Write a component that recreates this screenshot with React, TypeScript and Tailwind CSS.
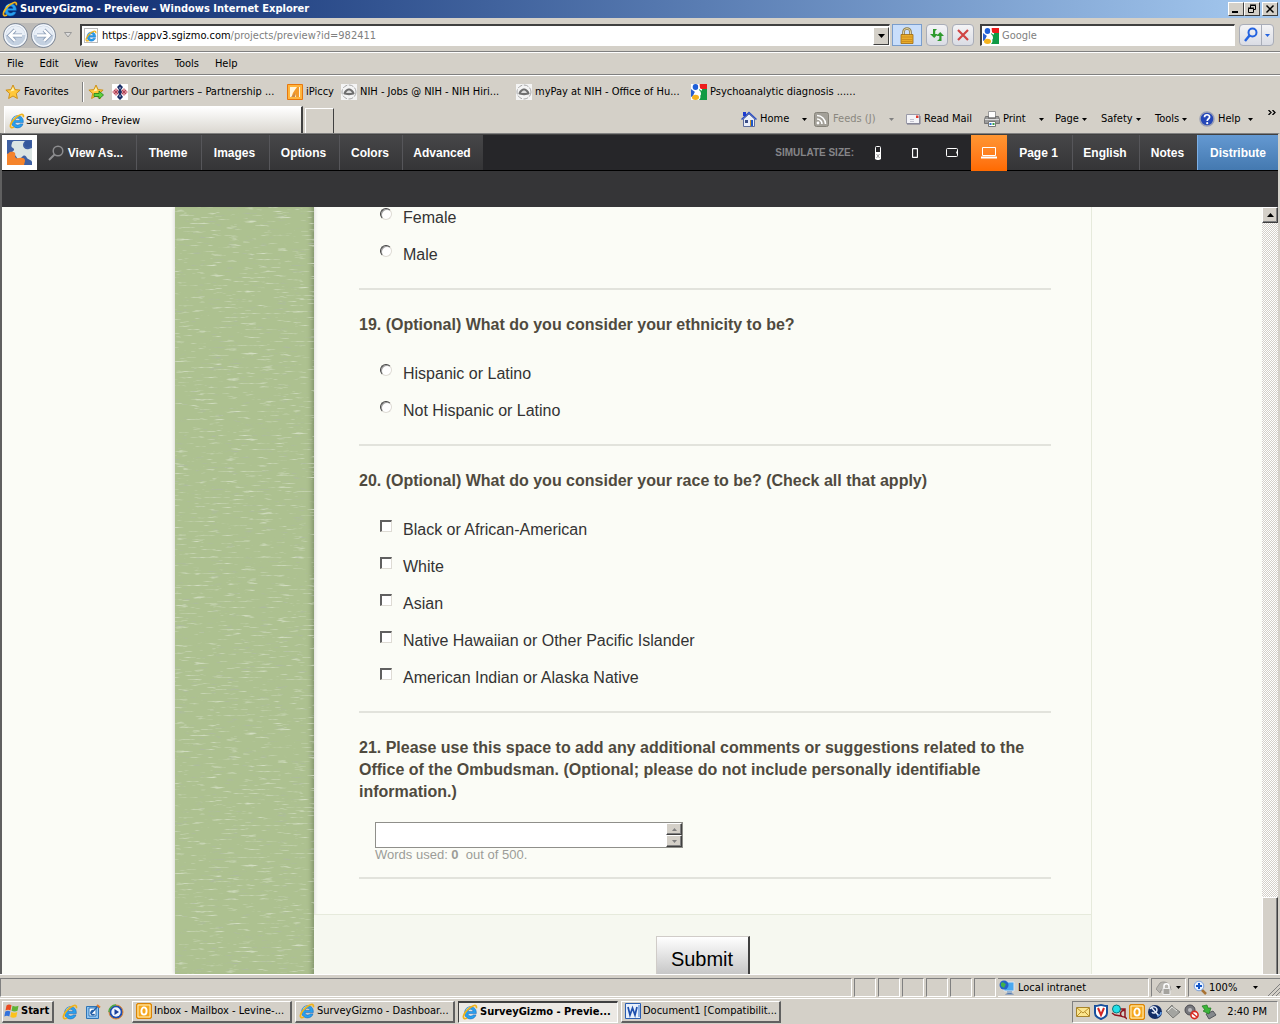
import {ReactNode} from "react";
import clsx from "clsx";

const raised = "border border-t-white border-l-white border-r-[#404040] border-b-[#404040] bg-[#d4d0c8]";
const sunken = "border border-t-[#808080] border-l-[#808080] border-r-white border-b-white";

interface IconProps {
    className?: string;
}

function IeIcon({className = "size-4"}: IconProps) {
    return (
        <svg className={clsx("shrink-0", className)} viewBox="0 0 16 16">
            <path
                d="M14.300 9.600H6c.2 1.800 1.300 2.500 2.600 2.500 1 0 1.800-.4 2.200-1.200h3.200c-.8 2.600-2.800 4-5.500 4-3.600 0-5.900-2.400-5.900-6s2.400-6.200 6-6.200c3.800 0 6 2.600 5.700 6.900zM11 7.400C10.800 6 10 5.200 8.600 5.200S6.300 6 6.100 7.400z"
                fill="#28a0ee"
                stroke="#0f5cb4"
                strokeWidth=".5"
            />
            <path d="M4 6.500c.7-1.700 2.300-2.800 4.300-2.900" fill="none" stroke="#8fe0ff" strokeWidth="1.200" />
            <path
                d="M14.300 4.300C14.900 2 13.800.9 11.500 1.700 7.500 3 2.500 8.200 1.500 12c-.6 2.600 1 3.200 3.500 1.900"
                fill="none"
                stroke="#f0b31c"
                strokeWidth="1.700"
            />
        </svg>
    );
}

function GoogleIcon() {
    return (
        <svg className="size-4 shrink-0" viewBox="0 0 16 16">
            <path d="M0 0h16v16H0z" fill="#fff" />
            <path d="M8 0h8v5H9z" fill="#ee1c1c" />
            <path d="M8 5h8v11H8c2-2 2-4 0-6z" fill="#0f9a45" />
            <path d="M0 5l4 3-2 4-2 1z" fill="#2a5fd0" />
            <path d="M4 5c4 0 6 2 6 5s-3 2-8 2l2-4z" fill="#fff" />
            <ellipse cx="4.500" cy="3" fill="#1f5fd8" rx="2.800" ry="3" />
            <ellipse cx="4.500" cy="13.300" fill="#f5b21c" rx="3.500" ry="2.600" />
            <path d="M8 0v3c0 2 1 2.500 3 3" fill="none" stroke="#fff" strokeWidth="1.300" />
        </svg>
    );
}

function StarIcon({add = false}: {add?: boolean}) {
    return (
        <svg className="size-4 shrink-0" viewBox="0 0 16 16">
            <path
                d="M8 1l2.100 4.600 5 .5-3.800 3.400 1.100 5L8 12l-4.400 2.500 1.100-5L.9 6.100l5-.5z"
                fill="#ffc83a"
                stroke="#c98a12"
                strokeWidth=".9"
            />
            <path d="M8 3l1.400 3.400-4 1z" fill="#fff3b0" />
            {add && <path d="M6 9.500h5V7l4.500 4-4.500 4v-2.500H6z" fill="#5fd13c" stroke="#1d7d16" strokeWidth=".8" />}
        </svg>
    );
}

function PartnersIcon() {
    return (
        <svg className="size-4 shrink-0" viewBox="0 0 16 16">
            <path d="M0 0h16v16H0z" fill="#fff" />
            <path d="M0 8l4-4 4 4-4 4zM8 8l4-4 4 4-4 4z" fill="#d98a97" />
            <path d="M2 6l4 4M2 10l4-4M10 6l4 4M10 10l4-4" stroke="#b04456" />
            <path d="M8 0l3 3-2 3 1 2-1 2 2 3-3 3-3-3 2-3-1-2 1-2-2-3z" fill="#1c2f66" />
            <path d="M8 3v2M8 11v2" stroke="#b9c4e4" />
        </svg>
    );
}

function PiccyIcon() {
    return (
        <svg className="size-4 shrink-0" viewBox="0 0 16 16">
            <path d="M.5.500h15v15H.5z" fill="#ffb53e" stroke="#e8770c" />
            <path d="M3 3h10v10H3z" fill="#fff6e0" />
            <path d="M12 3v10H9l-1-3-3 3c0-4 3-7 5-10z" fill="#f39a2b" />
            <path d="M4 13l4-4v4z" fill="#c98a4a" />
        </svg>
    );
}

function NihIcon() {
    return (
        <svg className="size-4 shrink-0" viewBox="0 0 16 16">
            <path d="M0 0h16v16H0z" fill="#f4f4f4" />
            <circle cx="8" cy="8" fill="none" r="7" stroke="#a8a8a8" strokeDasharray="5 1.500" />
            <path d="M2.500 10c0-3 3-5.500 5.500-5.500s5.500 2.500 5.500 5.500c-2 1.500-9 1.500-11 0z" fill="#6f6f6f" />
            <path d="M5 9c1-2 2-2.500 3-2.500s2 .5 3 2.500z" fill="#ddd" />
        </svg>
    );
}

function HomeIcon() {
    return (
        <svg className="size-4 shrink-0" viewBox="0 0 16 16">
            <path d="M2.500 8v7.500h11V8L8 3z" fill="#e9eefa" stroke="#5c6c9c" />
            <path d="M.5 8.500L8 1.500l7.500 7" fill="none" stroke="#2c4fc4" strokeWidth="1.500" />
            <path d="M2 1h3v4H2z" fill="#1b3bd0" />
            <path d="M4 9h3v3H4z" fill="#3a4d86" />
            <path d="M9 9h3v6H9z" fill="#1f57c8" />
            <path d="M9 9h1v6H9z" fill="#c8992c" />
        </svg>
    );
}

function FeedIcon() {
    return (
        <svg className="size-[15px] shrink-0" viewBox="0 0 15 15">
            <rect fill="#a3a098" height="14" rx="2" stroke="#858279" width="14" x=".5" y=".5" />
            <circle cx="4" cy="11" fill="#fff" r="1.400" />
            <path d="M3 7a5 5 0 015 5M3 3.500A8.500 8.500 0 0111.500 12" fill="none" stroke="#fff" strokeWidth="1.600" />
        </svg>
    );
}

function MailIcon() {
    return (
        <svg className="h-4 w-[15px] shrink-0" viewBox="0 0 15 16">
            <path d="M.5 3.500h13v9H.5z" fill="#f4f4f8" stroke="#9a9aa8" />
            <path d="M1 13h13V5" fill="none" stroke="#77778a" />
            <path d="M10 4.500h2.500V7H10z" fill="#e0392b" />
            <path d="M4 8.500h4M4 10.500h4" stroke="#c4c4d0" />
        </svg>
    );
}

function PrintIcon() {
    return (
        <svg className="size-4 shrink-0" viewBox="0 0 16 16">
            <path d="M4.500.500h7v6h-7z" fill="#fff" stroke="#999" />
            <path d="M1.500 5.500h3v2h7v-2h3l1 3v4H.5v-4z" fill="#9b9b9b" stroke="#666" strokeWidth=".8" />
            <path d="M1 8.500h14" stroke="#dcdcdc" />
            <path d="M4.500 10.500h7v5h-7z" fill="#fff" stroke="#777" />
            <path d="M5.500 12h2v2h-2z" fill="#2b72d6" />
            <path d="M8.500 12h2v2h-2z" fill="#35a345" />
        </svg>
    );
}

function HelpIcon() {
    return (
        <svg className="size-4 shrink-0" viewBox="0 0 16 16">
            <circle cx="8" cy="8" fill="#2547b8" r="7" stroke="#9a9fb4" strokeWidth="1.500" />
            <path d="M5.500 6.200C5.500 3 10.600 3 10.600 6c0 1.800-2.400 1.800-2.400 4" fill="none" stroke="#fff" strokeWidth="1.700" />
            <circle cx="8.200" cy="12.200" fill="#fff" r="1.100" />
        </svg>
    );
}

function LockIcon() {
    return (
        <svg className="h-[17px] w-4" viewBox="0 0 16 17">
            <path d="M4.500 8V5a3.500 3.500 0 017 0v3" fill="none" stroke="#8b7a4a" strokeWidth="2.600" />
            <path d="M4.500 8V5a3.500 3.500 0 017 0v3" fill="none" stroke="#e5d6a0" />
            <path d="M2 7.500h12v9H2z" fill="#e9ac2a" stroke="#a0690e" strokeWidth=".8" />
            <path d="M2.500 10h11M2.500 12.500h11M2.500 14.500h11" stroke="#c8881c" strokeWidth=".8" />
        </svg>
    );
}

function NavArrow({flip = false}: {flip?: boolean}) {
    return (
        <svg className="size-[25px]" viewBox="0 0 25 25">
            <circle cx="12.500" cy="12.500" fill="#b3c3d8" r="12" stroke="#7d8592" />
            <circle cx="12.500" cy="12.500" fill="#c3d0e0" r="10.700" stroke="#f6f9fd" strokeWidth="1.300" />
            <path d="M3 12a9.500 9 0 0119 0z" fill="#e9eff7" />
            <g fill="none" transform={flip ? "rotate(180 12.500 12.500)" : undefined}>
                <path d="M12 7l-5.500 5.500L12 18M7 12.500h12" stroke="#8fa0b8" strokeWidth="4" />
                <path d="M12 7l-5.500 5.500L12 18M7 12.500h12" stroke="#fff" strokeWidth="2.400" />
            </g>
        </svg>
    );
}

function PuzzleIcon() {
    return (
        <svg className="size-[25px]" viewBox="0 0 25 25">
            <path d="M0 0h25v25H0z" fill="#3f60a2" />
            <path
                d="M5 3c0-1 1-2 2-2h11c-1 1-2 2-2 4 0 3 3 5 6 4l3-1v14c-1-3-4-2-5-4s-2-3-4-2-2 3-4 3-2-2-4-4c-2-1-3-1-3-3 2-1 3-3 1-4S4 6 5 3z"
                fill="#dbe5e4"
            />
            <circle cx="21" cy="4" fill="#34589d" r="3.300" />
            <path d="M0 14l2-1c0-1 4-2 6 0 1 2-1 3 1 5 2 1 4-1 6 0 3 0 3 2 3 3l-1 4H0z" fill="#f5842c" />
        </svg>
    );
}

function Caret({className = "fill-black"}: IconProps) {
    return (
        <svg className={clsx("h-[3px] w-[5px] shrink-0", className)} viewBox="0 0 5 3">
            <path d="M0 0h5L2.500 3z" />
        </svg>
    );
}

function WindowButton({label, children}: {label: string; children: ReactNode}) {
    return (
        <button aria-label={label} className={clsx(raised, "flex h-[14px] w-4 items-center justify-center")}>
            <svg className="h-[10px] w-[10px] shrink-0" fill="none" stroke="#000" viewBox="0 0 10 10">
                {children}
            </svg>
        </button>
    );
}

function TitleBar() {
    return (
        <header className="flex h-[18px] shrink-0 items-center gap-0.5 bg-linear-to-r from-[#0a246a] to-[#a6caf0] px-0.5">
            <IeIcon />
            <h1 className="flex-1 text-[11px] font-bold text-white">SurveyGizmo - Preview - Windows Internet Explorer</h1>
            <div className="flex">
                <WindowButton label="Minimize">
                    <path d="M1 8h6" strokeWidth="2" />
                </WindowButton>
                <WindowButton label="Restore">
                    <path d="M3.500 4V1.500h5v4H7M3 1h6M1.500 4.500h5v4h-5zM1 4h6" />
                </WindowButton>
                <span className="w-0.5" />
                <WindowButton label="Close">
                    <path d="M1.500 1.500l7 7M8.500 1.500l-7 7" strokeWidth="1.500" />
                </WindowButton>
            </div>
        </header>
    );
}

function AddressBar() {
    const tool = "flex h-[22px] items-center justify-center rounded-sm border border-[#a9adb8] bg-linear-to-b from-[#f4f4f6] to-[#dadce4]";

    return (
        <div className="flex h-[34px] shrink-0 items-center border-b border-[#808080] pt-px pr-1.5 pl-[3px]">
            <div className="mr-2 flex gap-[3px] rounded-full bg-[#bdbbb8]">
                <button aria-label="Back">
                    <NavArrow />
                </button>
                <button aria-label="Forward">
                    <NavArrow flip />
                </button>
            </div>
            <svg className="mr-2 h-1.5 w-2" fill="#ddd" stroke="#999" viewBox="0 0 8 6">
                <path d="M.5.500h7L4 5z" />
            </svg>
            <div className="flex h-[22px] flex-1 items-center border border-t-2 border-l-2 border-[#404040] border-r-white border-b-white bg-white pl-0.5">
                <span className="mr-1 flex h-[15px] w-3.5 items-center border border-[#bbb]">
                    <IeIcon className="size-3" />
                </span>
                <span className="flex-1 text-[11px] text-[#808080]">
                    <span className="text-black">https</span>://<span className="text-black">appv3.sgizmo.com</span>
                    /projects/preview?id=982411
                </span>
                <button
                    aria-label="Show addresses"
                    className={clsx(raised, "flex h-[18px] w-4 items-center justify-center")}
                >
                    <svg className="h-1 w-[7px]" viewBox="0 0 7 4">
                        <path d="M0 0h7L3.500 4z" />
                    </svg>
                </button>
            </div>
            <button
                aria-label="Security report"
                className="ml-0.5 flex h-[22px] w-[30px] items-center justify-center border border-[#7a9dcc] bg-[#c9defb]"
            >
                <LockIcon />
            </button>
            <button aria-label="Refresh" className={clsx(tool, "ml-1 w-[22px]")}>
                <svg className="size-4" fill="#2f9a2f" viewBox="0 0 16 16">
                    <path d="M8 2H4v5H1l4.200 4L9 7H6.200V4z" />
                    <path d="M8 14h4.500V9H15l-3.800-4L7.500 9h2.800v3z" />
                </svg>
            </button>
            <button aria-label="Stop" className={clsx(tool, "ml-1 w-[22px]")}>
                <svg className="size-4" stroke="#d04444" strokeWidth="2.200" viewBox="0 0 16 16">
                    <path d="M3 3l10 10M13 3L3 13" />
                </svg>
            </button>
            <div className="ml-1.5 flex h-[22px] w-[255px] items-center gap-[3px] border border-t-2 border-l-2 border-[#404040] border-r-white border-b-white bg-white pl-px">
                <GoogleIcon />
                <input
                    aria-label="Search"
                    className="min-w-0 flex-1 text-[11px] outline-none placeholder:text-[#808080]"
                    placeholder="Google"
                />
            </div>
            <div className={clsx(tool, "ml-1 w-[35px]")}>
                <button aria-label="Search now" className="flex flex-1 justify-center">
                    <svg className="size-4" fill="none" stroke="#2463e0" strokeWidth="2" viewBox="0 0 16 16">
                        <circle cx="9.500" cy="5.500" r="4" />
                        <path d="M6.500 8.500L2 14" strokeWidth="2.500" />
                    </svg>
                </button>
                <button
                    aria-label="Search options"
                    className="flex h-full w-3 items-center justify-center border-l border-[#a9adb8]"
                >
                    <Caret className="fill-[#2463e0]" />
                </button>
            </div>
        </div>
    );
}

function FavoritesBar() {
    const link = "flex items-center gap-[3px] whitespace-nowrap";

    return (
        <div className="flex h-[30px] shrink-0 items-center border-t border-white pt-0.5 pl-[5px]">
            <button className="flex w-[77px] items-center gap-[3px]">
                <StarIcon />
                Favorites
            </button>
            <span className="mr-1 h-5 w-0.5 border-r border-l border-l-[#808080] border-r-white" />
            <button aria-label="Add to favorites bar" className="w-6">
                <StarIcon add />
            </button>
            <a className={clsx(link, "w-[175px]")} href="#">
                <PartnersIcon />
                Our partners – Partnership ...
            </a>
            <a className={clsx(link, "w-[54px]")} href="#">
                <PiccyIcon />
                iPiccy
            </a>
            <a className={clsx(link, "w-[175px]")} href="#">
                <NihIcon />
                NIH - Jobs @ NIH - NIH Hiri...
            </a>
            <a className={clsx(link, "w-[175px]")} href="#">
                <NihIcon />
                myPay at NIH - Office of Hu...
            </a>
            <a className={link} href="#">
                <GoogleIcon />
                Psychoanalytic diagnosis ......
            </a>
        </div>
    );
}

function CommandBar() {
    const item = "flex items-center gap-[3px] whitespace-nowrap";

    return (
        <div className="flex h-[28px] shrink-0 items-end">
            <div className="ml-1 flex h-[27px] w-[299px] items-center gap-px border-t border-r-2 border-l border-t-white border-r-[#404040] border-l-white bg-linear-to-b from-white to-[#dad7d0] pt-0.5 pl-1">
                <IeIcon />
                SurveyGizmo - Preview
            </div>
            <button
                aria-label="New tab"
                className="ml-0.5 h-[25px] w-[29px] border-t border-r border-l border-white border-r-[#404040]"
            />
            <div className="flex h-[28px] flex-1 items-center justify-end pr-1">
                <button className={clsx(item, "w-[73px]")}>
                    <HomeIcon />
                    Home
                    <Caret className="ml-2.5" />
                </button>
                <button className={clsx(item, "w-[92px] text-[#8a877f]")}>
                    <FeedIcon />
                    <span className="ml-px">Feeds (J)</span>
                    <Caret className="ml-2.5 fill-[#808080]" />
                </button>
                <button className={clsx(item, "w-[78px]")}>
                    <MailIcon />
                    Read Mail
                </button>
                <button className={clsx(item, "w-[71px]")}>
                    <PrintIcon />
                    Print
                    <Caret className="ml-2.5" />
                </button>
                <button className={clsx(item, "w-[46px]")}>
                    Page <Caret />
                </button>
                <button className={clsx(item, "w-[54px]")}>
                    Safety <Caret />
                </button>
                <button className={clsx(item, "w-[44px]")}>
                    Tools <Caret />
                </button>
                <button className={clsx(item, "w-[69px]")}>
                    <HelpIcon />
                    Help
                    <Caret className="ml-1" />
                </button>
                <button aria-label="More commands" className="mb-3.5">
                    <svg className="h-[5px] w-2" fill="none" stroke="#000" strokeWidth="1.300" viewBox="0 0 8 5">
                        <path d="M.5 0L3 2.500.5 5M4.500 0L7 2.500 4.500 5" />
                    </svg>
                </button>
            </div>
        </div>
    );
}

function GizmoBar() {
    const tab =
        "flex h-full items-center justify-center border-r border-[#56565a] bg-linear-to-b from-[#464648] to-[#353537] pr-0.5 text-xs font-bold text-white";
    const device = "flex h-full w-[37px] items-center justify-center";

    return (
        <nav className="shrink-0 border-t border-[#404040] bg-[#353537] font-['Liberation_Sans',sans-serif]">
            <div className="flex h-9 items-center border-b border-black bg-[#262629]">
                <a aria-label="SurveyGizmo" className="flex size-[35px] items-center justify-center bg-white" href="#">
                    <PuzzleIcon />
                </a>
                <button className={clsx(tab, "w-[100px] gap-1")}>
                    <svg className="size-4" fill="none" stroke="#8d8d8f" strokeWidth="1.500" viewBox="0 0 16 16">
                        <circle cx="10" cy="6" r="4.800" />
                        <path d="M6.500 9.500L1 15" strokeWidth="2" />
                    </svg>
                    View As...
                </button>
                <button className={clsx(tab, "w-[65px]")}>Theme</button>
                <button className={clsx(tab, "w-[68px]")}>Images</button>
                <button className={clsx(tab, "w-[70px]")}>Options</button>
                <button className={clsx(tab, "w-[63px]")}>Colors</button>
                <button className={clsx(tab, "w-[80px] border-r-0")}>Advanced</button>
                <span className="ml-auto pr-[5px] text-[10px] font-bold text-[#858588]">SIMULATE SIZE:</span>
                <button aria-label="Feature phone" className={device}>
                    <svg className="h-3.5 w-1.5" viewBox="0 0 6 14">
                        <rect fill="none" height="13" rx="1" stroke="#fff" width="5" x=".5" y=".5" />
                        <path d="M0 6h6v7H0z" fill="#fff" />
                        <path d="M1.500 8l3 4M4.500 8l-3 4" stroke="#777" strokeWidth=".7" />
                    </svg>
                </button>
                <button aria-label="Smartphone" className={device}>
                    <svg className="h-2.5 w-1.5" fill="none" stroke="#fff" viewBox="0 0 6 10">
                        <rect height="9" rx="1" strokeWidth="1.300" width="5" x=".5" y=".5" />
                    </svg>
                </button>
                <button aria-label="Tablet" className={device}>
                    <svg className="h-[9px] w-3" fill="none" stroke="#fff" viewBox="0 0 12 9">
                        <rect height="8" rx="1" width="11" x=".5" y=".5" />
                        <path d="M11 3.500v2" strokeWidth="1.500" />
                    </svg>
                </button>
                <button
                    aria-label="Desktop"
                    className="ml-px flex h-9 w-9 items-center justify-center bg-linear-to-b from-[#ff9632] to-[#ff6a00]"
                >
                    <svg className="h-3 w-4" fill="none" stroke="#fff" viewBox="0 0 16 12">
                        <path d="M1.500.500h13v8h-13z" />
                        <path d="M0 10.500h16" strokeWidth="2" />
                    </svg>
                </button>
                <button className={clsx(tab, "w-[66px]")}>Page 1</button>
                <button className={clsx(tab, "w-[67px]")}>English</button>
                <button className={clsx(tab, "w-[58px] border-r-[#7db0e6]")}>Notes</button>
                <button className="h-full w-20 bg-linear-to-b from-[#6499d2] to-[#4479b0] text-xs font-bold text-white">
                    Distribute
                </button>
            </div>
            <div className="h-9" />
        </nav>
    );
}

function PaperTexture() {
    return (
        <svg aria-hidden="true" className="h-full w-full">
            <filter height="100%" id="grain" width="100%" x="0" y="0">
                <feTurbulence baseFrequency="0.06 0.5" numOctaves="3" result="n" seed="4" type="fractalNoise" />
                <feColorMatrix in="n" result="d" values="0 0 0 0 .42  0 0 0 0 .48  0 0 0 0 .38  5 0 0 0 -3.350" />
                <feColorMatrix in="n" result="l" values="0 0 0 0 .76  0 0 0 0 .82  0 0 0 0 .69  0 4 0 0 -2.450" />
                <feMerge>
                    <feMergeNode in="l" />
                    <feMergeNode in="d" />
                </feMerge>
            </filter>
            <rect filter="url(#grain)" height="100%" opacity=".7" width="100%" />
        </svg>
    );
}

function Option({type, name, label}: {type: "radio" | "checkbox"; name: string; label: string}) {
    return (
        <label className="flex h-[37px] items-center gap-[11px] pl-[21px] text-base text-[#333]">
            <input
                className={clsx(
                    "mb-2 size-3 appearance-none border-r-[#dedbd4] border-b-[#dedbd4] bg-white",
                    type === "radio"
                        ? "rounded-full border-[1px] border-t-[#404040] border-l-[#404040] shadow-[inset_1px_1px_#a0a0a0]"
                        : "border border-t-2 border-l-2 border-t-[#606060] border-l-[#606060]",
                )}
                name={name}
                type={type}
            />
            {label}
        </label>
    );
}

function Question({title, children}: {title?: string; children: ReactNode}) {
    return (
        <fieldset className="border-b-2 border-[#e2e3dc] pb-[15px]">
            {title && (
                <legend className="mb-[19px] pt-6 text-base leading-[22px] font-bold text-[#4f4a3e]">{title}</legend>
            )}
            {children}
        </fieldset>
    );
}

function ScrollButton({up = false, small = false}: {up?: boolean; small?: boolean}) {
    return (
        <button
            aria-label={up ? "Scroll up" : "Scroll down"}
            className={clsx(
                raised,
                "flex w-4 items-center justify-center shadow-[inset_-1px_-1px_#808080]",
                small ? "h-3" : "h-4",
            )}
        >
            <svg
                className={clsx(small ? "h-[3px] w-[5px] fill-[#808080]" : "h-1 w-[7px]", !up && "rotate-180")}
                viewBox="0 0 7 4"
            >
                <path d="M0 4h7L3.500 0z" />
            </svg>
        </button>
    );
}

function Survey() {
    return (
        <main className="flex min-h-0 flex-1 bg-[#fbfcf6] font-['Liberation_Sans',sans-serif]">
            <div className="flex min-w-0 flex-1 justify-center overflow-hidden pl-[3px]">
                <div className="w-[139px] shrink-0 bg-[#adc190] shadow-[0_0_4px_#ccc]">
                    <div className="h-full shadow-[inset_-6px_0_5px_-4px_#7f9168]">
                        <PaperTexture />
                    </div>
                </div>
                <form className="flex w-[778px] min-w-0 flex-col border-r border-[#e6eadc]">
                    <div className="-mt-2 pr-10 pb-[35px] pl-[45px]">
                        <Question>
                            <Option label="Female" name="gender" type="radio" />
                            <Option label="Male" name="gender" type="radio" />
                        </Question>
                        <Question title="19. (Optional) What do you consider your ethnicity to be?">
                            <Option label="Hispanic or Latino" name="ethnicity" type="radio" />
                            <Option label="Not Hispanic or Latino" name="ethnicity" type="radio" />
                        </Question>
                        <Question title="20. (Optional) What do you consider your race to be? (Check all that apply)">
                            <Option label="Black or African-American" name="race" type="checkbox" />
                            <Option label="White" name="race" type="checkbox" />
                            <Option label="Asian" name="race" type="checkbox" />
                            <Option label="Native Hawaiian or Other Pacific Islander" name="race" type="checkbox" />
                            <Option label="American Indian or Alaska Native" name="race" type="checkbox" />
                        </Question>
                        <Question title="21. Please use this space to add any additional comments or suggestions related to the Office of the Ombudsman. (Optional; please do not include personally identifiable information.)">
                            <div className="ml-4 flex h-[26px] w-[308px] border border-[#8f8f8a] bg-white">
                                <textarea
                                    aria-label="Additional comments"
                                    className="min-w-0 flex-1 resize-none overflow-hidden outline-none"
                                />
                                <div>
                                    <ScrollButton small up />
                                    <ScrollButton small />
                                </div>
                            </div>
                            <p className="ml-4 text-[13px] leading-[14px] text-[#9c9c98]">
                                Words used: <b>0</b>&nbsp; out of 500.
                            </p>
                        </Question>
                    </div>
                    <div className="flex flex-1 justify-center border-t border-[#e6eadc] bg-[#f6f8f0] pt-[21px]">
                        <button
                            className="h-10 w-[94px] border-t border-r-2 border-l border-t-[#d0ccc8] border-r-[#404040] border-l-[#d0ccc8] bg-linear-to-b from-white to-[#c4c4c4] pt-1 text-xl text-black"
                            type="button"
                        >
                            Submit
                        </button>
                    </div>
                </form>
            </div>
            <div className="flex w-4 flex-col justify-between bg-[repeating-conic-gradient(#fff_0_25%,#d4d0c8_0_50%)] bg-size-[2px_2px]">
                <ScrollButton up />
                <div className={clsx(raised, "h-[77px] border-b-0 shadow-[inset_-1px_0_#808080]")} />
            </div>
        </main>
    );
}

function StatusBar() {
    const pane = clsx(sunken, "h-[19px]");

    return (
        <div className="flex h-6 shrink-0 items-center gap-0.5 border-t border-white pt-1 pb-0.5">
            <div className={clsx(pane, "flex-1")} />
            {[1, 2, 3, 4, 5, 6].map((n) => (
                <div key={n} className={clsx(pane, "w-[22px]")} />
            ))}
            <div className={clsx(pane, "flex w-[151px] items-center gap-[3px] border-l-0 pl-px")}>
                <svg className="size-4" viewBox="0 0 16 16">
                    <path d="M5 2h10v9H5z" fill="#4aa8f0" stroke="#dfe5ee" />
                    <path d="M8 11h5v3H8z" fill="#9fb4cc" />
                    <circle cx="5" cy="5" fill="#2463c8" r="4.500" />
                    <path d="M2 3c3-2 3 1 5 1l-2 4-3-2z" fill="#40b04b" />
                    <path d="M6 14.500c2-2 7-2 9 0z" fill="#5a7db0" />
                </svg>
                Local intranet
            </div>
            <button aria-label="Protected mode" className={clsx(pane, "flex w-[35px] items-center justify-between px-1")}>
                <svg className="size-4" viewBox="0 0 16 16">
                    <path d="M0 9l4-6c3-2 8-1 10 3l1 4H5l-1 3z" fill="#b8b6b1" stroke="#9a9894" />
                    <path d="M8 9V6c0-3 5-3 5 0v3" fill="none" stroke="#fff" strokeWidth="1.500" />
                    <path d="M7 8.500h7v6H7z" fill="#a5a39e" stroke="#eee" />
                </svg>
                <Caret />
            </button>
            <button className={clsx(pane, "flex w-[92px] items-center border-r-0 pl-1")}>
                <svg className="size-4" viewBox="0 0 16 16">
                    <path d="M8 9l5 5" stroke="#a87333" strokeWidth="2.500" />
                    <circle cx="6" cy="6" fill="#eaf3ff" r="4.800" stroke="#7ba0d8" />
                    <path d="M6 3v6M3 6h6" stroke="#1557c8" strokeWidth="2" />
                </svg>
                100%
                <Caret className="ml-4" />
                <svg className="ml-auto size-3 self-end" stroke="#808080" viewBox="0 0 12 12">
                    <path d="M0 12L12 0M4 12l8-8M8 12l4-4" />
                </svg>
            </button>
        </div>
    );
}

function TaskButton({icon, label, active = false}: {icon: ReactNode; label: string; active?: boolean}) {
    return (
        <button
            className={clsx(
                "flex h-[22px] w-40 min-w-0 items-center gap-0.5 border pl-[3px] whitespace-nowrap",
                active
                    ? "border-t-2 border-[#404040] border-r-white border-b-white bg-[#ece9e4] font-bold"
                    : "border-r-2 border-b-2 border-white border-r-[#606060] border-b-[#606060]",
            )}
        >
            {icon}
            <span>{label}</span>
        </button>
    );
}

function OutlookIcon() {
    return (
        <svg className="size-4 shrink-0" viewBox="0 0 16 16">
            <rect fill="#f6a81c" height="15" rx="1.500" stroke="#d98408" width="15" x=".5" y=".5" />
            <path d="M2 2h12v12H2z" fill="none" stroke="#fff0c0" />
            <ellipse cx="8" cy="8" fill="none" rx="2.600" ry="3.600" stroke="#fff" strokeWidth="1.900" />
        </svg>
    );
}

function Taskbar() {
    return (
        <footer className="flex h-[26px] shrink-0 items-center border-t border-white px-0.5">
            <button className="mr-2 flex h-[22px] w-[52px] items-center gap-px border border-r-2 border-b-2 border-white border-r-[#606060] border-b-[#606060] pl-px font-bold">
                <svg className="size-4" viewBox="0 0 16 16">
                    <path d="M2.500 2.500C4.500 1 6 1.500 7.500 2.300L6.500 7.500C5 6.700 3.500 6.500 1.500 7.500z" fill="#ea4a1f" />
                    <path d="M8.500 2.800c2 1 4 1 6 0l-1 5c-2 1-4 1-6 0z" fill="#5fb336" />
                    <path d="M1.300 8.500c2-1 3.500-.8 5 0l-1 5c-1.500-.8-3-1-5 0z" fill="#3272dc" />
                    <path d="M7.300 9c2 1 4 1 6 0l-1 5c-2 1-4 1-6 0z" fill="#fbc21c" />
                </svg>
                Start
            </button>
            <div className="mr-2 flex gap-[7px]">
                <a aria-label="Internet Explorer" href="#">
                    <IeIcon />
                </a>
                <a aria-label="Show desktop" href="#">
                    <svg className="size-4" viewBox="0 0 16 16">
                        <path d="M1.500 2.500h12v12h-12z" fill="#8fc4f2" stroke="#2e74b5" />
                        <path d="M4 4h7v8H4z" fill="#fff" stroke="#2e74b5" />
                        <path d="M9 7a2 2 0 10.500 3M6.500 9L13 2" fill="none" stroke="#225fa8" strokeWidth="1.500" />
                        <path d="M12 1l3 2.500" stroke="#e07a28" strokeWidth="2" />
                    </svg>
                </a>
                <a aria-label="Media Player" href="#">
                    <svg className="size-4" viewBox="0 0 16 16">
                        <circle cx="8" cy="8" fill="#1d4cb0" r="7" stroke="#e9882a" />
                        <path d="M1 8a7 7 0 017-7" fill="none" stroke="#48a848" strokeWidth="1.500" />
                        <circle cx="8" cy="8" fill="#eef4ff" r="4.700" />
                        <path d="M6.500 5l4.500 3-4.500 3z" fill="#1b3f9a" />
                    </svg>
                </a>
            </div>
            <div className="flex min-w-0 flex-1 gap-[3px]">
                <TaskButton icon={<OutlookIcon />} label="Inbox - Mailbox - Levine-..." />
                <TaskButton icon={<IeIcon />} label="SurveyGizmo - Dashboar..." />
                <TaskButton active icon={<IeIcon />} label="SurveyGizmo - Previe..." />
                <TaskButton
                    icon={
                        <svg className="size-4 shrink-0" viewBox="0 0 16 16">
                            <path d="M.5.500h15v15H.5z" fill="#e8f0fc" stroke="#2a5db0" />
                            <path d="M13 2v12h2V2z" fill="#8fb2e6" />
                            <path d="M3 4l2 8 2.500-7L10 12l2-8" fill="none" stroke="#1e4fae" strokeWidth="1.700" />
                        </svg>
                    }
                    label="Document1 [Compatibilit..."
                />
            </div>
            <div className={clsx(sunken, "flex h-[22px] w-[206px] items-center gap-0.5 pl-0.5")}>
                <svg className="size-4" viewBox="0 0 16 16">
                    <path d="M1.500 3.500h13v9h-13z" fill="#fbe58e" stroke="#a8842a" />
                    <path d="M2 4l6 5 6-5M2 12l4-4M14 12l-4-4" fill="none" stroke="#b98f2a" />
                </svg>
                <svg className="size-4" viewBox="0 0 16 16">
                    <path d="M2 2c4 0 4-1 6-1s2 1 6 1v7c0 3-3 5-6 6-3-1-6-3-6-6z" fill="#fff" stroke="#164f9e" strokeWidth="2" />
                    <path d="M5 4l3 7 3-7" fill="none" stroke="#d02525" strokeWidth="2" />
                </svg>
                <svg className="size-4" viewBox="0 0 16 16">
                    <path d="M1 9l3 2 6 1M8 5h6v9M14 6c-6 1-6 7 0 7M14 13l2 2" fill="none" stroke="#8d1720" strokeWidth="1.500" />
                    <circle cx="5.500" cy="5" fill="#22e0e8" r="4" stroke="#08777c" />
                </svg>
                <OutlookIcon />
                <svg className="size-4" viewBox="0 0 16 16">
                    <circle cx="8" cy="8" fill="#122d66" r="7" />
                    <path d="M4 3l8 9M3 5c2-4 7-2 7 1s-4 4-5 2" fill="none" stroke="#e6ecf8" strokeWidth="1.500" />
                    <path d="M10 12a4 4 0 004-4" fill="none" stroke="#6aa4ee" strokeWidth="1.500" />
                </svg>
                <svg className="size-4" viewBox="0 0 16 16">
                    <path d="M1 7l6-6 1 2 7 5-7 6z" fill="#a4a4a0" stroke="#7b7b78" />
                    <path d="M3 7l4-4 5 4" fill="none" stroke="#e4e4e0" />
                </svg>
                <svg className="size-4" viewBox="0 0 16 16">
                    <circle cx="7" cy="6" fill="#77777c" r="5" stroke="#4a4a50" />
                    <circle cx="7" cy="6" fill="#bdbdc2" r="2" />
                    <circle cx="11.500" cy="11" fill="#fff" r="3.600" stroke="#d82a20" strokeWidth="1.600" />
                    <path d="M9 9l5 4" stroke="#d82a20" strokeWidth="1.500" />
                </svg>
                <svg className="size-4" viewBox="0 0 16 16">
                    <path d="M5 10l7-3 3 4-7 4z" fill="#85888c" stroke="#53565a" />
                    <path d="M1 2l5-1 1 3h3l-2 6-6-3 2-1z" fill="#3cb53a" stroke="#1e7a1e" strokeWidth=".7" />
                </svg>
                <time className="ml-auto pr-2.5">2:40 PM</time>
            </div>
        </footer>
    );
}

export default function App() {
    return (
        <div className="flex h-screen flex-col overflow-hidden bg-[#d4d0c8] font-['DejaVu_Sans_Condensed','DejaVu_Sans',sans-serif] text-[11px] leading-[14px] text-black">
            <TitleBar />
            <AddressBar />
            <div className="flex h-[23px] shrink-0 items-center gap-4 border-t border-b border-t-white border-b-[#808080] pt-px pl-[7px]">
                <button>File</button>
                <button>Edit</button>
                <button>View</button>
                <button>Favorites</button>
                <button>Tools</button>
                <button>Help</button>
            </div>
            <FavoritesBar />
            <CommandBar />
            <div className="flex min-h-0 flex-1 flex-col border-x-2 border-t border-[#808080] border-r-[#d4d0c8] border-l-[#606060]">
                <GizmoBar />
                <Survey />
            </div>
            <StatusBar />
            <Taskbar />
        </div>
    );
}
